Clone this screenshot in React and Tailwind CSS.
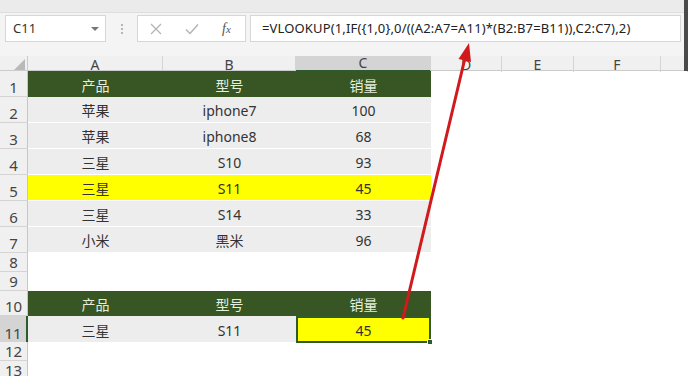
import React from "react";

const cols = ["A", "B", "C", "D", "E", "F", ""];

const rows = [
  { n: 1, h: "h-[26px]", kind: "head", cells: ["产品", "型号", "销量"] },
  { n: 2, h: "h-[26px]", kind: "data", cells: ["苹果", "iphone7", "100"] },
  { n: 3, h: "h-[26px]", kind: "data", cells: ["苹果", "iphone8", "68"] },
  { n: 4, h: "h-[26px]", kind: "data", cells: ["三星", "S10", "93"] },
  { n: 5, h: "h-[26px]", kind: "yellow", cells: ["三星", "S11", "45"] },
  { n: 6, h: "h-[26px]", kind: "data", cells: ["三星", "S14", "33"] },
  { n: 7, h: "h-[26px]", kind: "data", cells: ["小米", "黑米", "96"] },
  { n: 8, h: "h-[19px]", kind: "empty", cells: [] },
  { n: 9, h: "h-[19px]", kind: "empty", cells: [] },
  { n: 10, h: "h-[25px]", kind: "head", cells: ["产品", "型号", "销量"] },
  { n: 11, h: "h-[26px]", kind: "result", cells: ["三星", "S11", "45"] },
  { n: 12, h: "h-[19px]", kind: "empty", cells: [] },
  { n: 13, h: "h-[19px]", kind: "empty", cells: [] },
];

const grid =
  "grid grid-cols-[28px_135px_133px_135px_71px_72px_87px_1fr]";

function Cell({ kind, text, col }) {
  if (kind === "head") {
    return (
      <div className="flex items-center justify-center bg-[#375623] text-[#e6eedf] text-[14px] pt-[2px]">
        {text}
      </div>
    );
  }
  if (kind === "yellow") {
    return (
      <div className="flex items-center justify-center bg-[#ffff00] text-[#333] text-[14px] pt-[2px] border-b border-white">
        {text}
      </div>
    );
  }
  if (kind === "result" && col === 2) {
    return (
      <div className="relative flex items-center justify-center bg-[#ffff00] text-[#333] text-[14px] pt-[2px] border-2 border-[#2d5a2e]">
        {text}
        <div className="absolute -right-[4px] -bottom-[4px] w-[6px] h-[6px] bg-[#2d5a2e] border border-white"></div>
      </div>
    );
  }
  return (
    <div className="flex items-center justify-center bg-[#ededed] text-[#333] text-[14px] pt-[2px] border-b border-white">
      {text}
    </div>
  );
}

export default function App() {
  return (
    <div className="relative w-[688px] h-[376px] overflow-hidden bg-white font-['Noto_Sans','Noto_Sans_CJK_SC',sans-serif]">
      <div className="h-[13px] bg-[#ebebeb] border-b border-[#dedede]"></div>

      <div className="h-[43px] bg-[#f4f4f4] flex items-start pt-[2px]">
        <div className="ml-[5px] w-[101px] h-[27px] bg-white border border-[#d6d6d6] flex items-center justify-between pl-[7px] pr-[6px]">
          <span className="text-[13px] text-[#333]">C11</span>
          <span className="w-0 h-0 border-l-[4px] border-r-[4px] border-t-[4px] border-l-transparent border-r-transparent border-t-[#777]"></span>
        </div>
        <div className="w-[31px] h-[27px] flex flex-col items-center justify-center gap-[2px]">
          <span className="w-[2px] h-[2px] bg-[#b5b5b5]"></span>
          <span className="w-[2px] h-[2px] bg-[#b5b5b5]"></span>
          <span className="w-[2px] h-[2px] bg-[#b5b5b5]"></span>
        </div>
        <div className="w-[109px] h-[27px] bg-white border border-[#d6d6d6] flex items-center">
          <span className="ml-[12px] text-[#b4b4b4]">
            <svg width="12" height="12" viewBox="0 0 12 12">
              <path d="M1 1L11 11M11 1L1 11" stroke="currentColor" strokeWidth="1.3" fill="none" />
            </svg>
          </span>
          <span className="ml-[23px] text-[#b4b4b4]">
            <svg width="14" height="12" viewBox="0 0 14 12">
              <path d="M1 6.5L5 10.5L13 1.5" stroke="currentColor" strokeWidth="1.5" fill="none" />
            </svg>
          </span>
          <span className="ml-[23px] text-[14px] italic text-[#555] font-['Liberation_Serif',serif]">
            f<span className="text-[11px]">x</span>
          </span>
        </div>
        <div className="ml-[4px] w-[431px] h-[27px] bg-white border border-[#d6d6d6] flex items-center pl-[11px]">
          <span className="text-[13px] tracking-[0.15px] text-[#222] whitespace-nowrap">
            =VLOOKUP(1,IF({"{"}1,0{"}"},0/((A2:A7=A11)*(B2:B7=B11)),C2:C7),2)
          </span>
        </div>
        <div className="flex-1"></div>
      </div>

      <div className={`${grid} h-[15px] bg-[#f0f0f0] border-b border-[#cbcbcb]`}>
        <div className="relative border-r border-[#cbcbcb]">
          <svg className="absolute right-[2px] bottom-[2px]" width="11" height="11" viewBox="0 0 11 11">
            <polygon points="11,0 11,11 0,11" fill="#b9b9b9" />
          </svg>
        </div>
        {cols.map((c, i) => (
          <div
            key={i}
            className={`flex items-end justify-center text-[14px] leading-[14px] text-[#444] border-r border-[#d4d4d4] ${
              c === "C" ? "bg-[#d4d4d4] border-b-2 border-b-[#2d5a2e]" : ""
            }`}
          >
            {c}
          </div>
        ))}
      </div>

      {rows.map((r) => (
        <div key={r.n} className={`${grid} ${r.h}`}>
          <div
            className={`flex items-end justify-center text-[15px] leading-[17px] text-[#444] border-b border-[#d4d4d4] ${
              r.n === 11
                ? "bg-[#d4d4d4] border-r-2 border-r-[#2d5a2e]"
                : "bg-[#f0f0f0] border-r border-r-[#c6c6c6]"
            }`}
          >
            {r.n}
          </div>
          {r.kind === "empty"
            ? [0, 1, 2].map((i) => <div key={i}></div>)
            : r.cells.map((t, i) => (
                <Cell key={i} kind={r.kind} text={t} col={i} />
              ))}
          <div></div>
          <div></div>
          <div></div>
          <div></div>
        </div>
      ))}

      <div className="absolute top-0 right-0 w-[4px] h-[71px] bg-[#4a4a4a]"></div>

      <svg className="absolute left-0 top-0" width="688" height="376" viewBox="0 0 688 376">
        <line x1="403" y1="318" x2="465" y2="58" stroke="#d01a1d" strokeWidth="3" strokeLinecap="round" />
        <polygon points="469,43 458.5,59 471,62" fill="#d01a1d" />
      </svg>
    </div>
  );
}
